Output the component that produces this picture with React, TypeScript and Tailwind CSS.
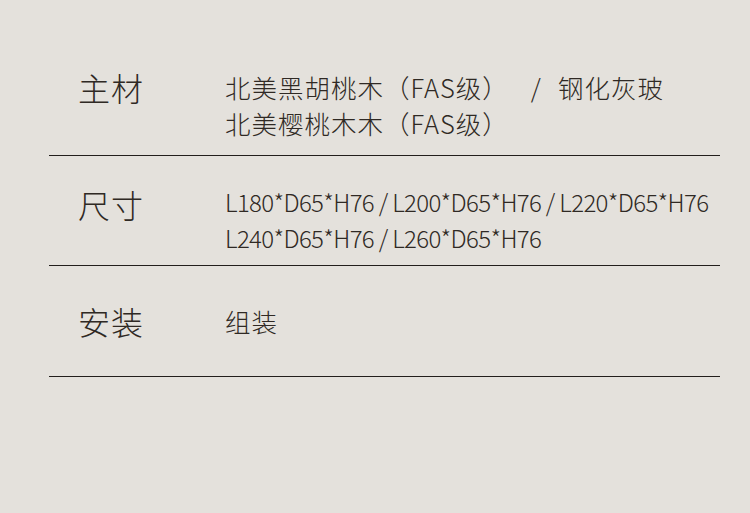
import React from 'react';

interface SpecRow {
  label: string;
  lines: React.ReactNode[];
  height: string;
  pad: string;
  latin?: boolean;
}

const rows: SpecRow[] = [
  {
    label: '主材',
    lines: [
      <>
        北美黑胡桃木（FAS级）<span className="ml-[22px] mr-[16px]">/</span>钢化灰玻
      </>,
      '北美樱桃木木（FAS级）',
    ],
    height: 'h-[156px]',
    pad: 'pt-[67px]',
  },
  {
    label: '尺寸',
    lines: ['L180*D65*H76 / L200*D65*H76 / L220*D65*H76', 'L240*D65*H76 / L260*D65*H76'],
    height: 'h-[110px]',
    pad: 'pt-[28px]',
    latin: true,
  },
  {
    label: '安装',
    lines: ['组装'],
    height: 'h-[111px]',
    pad: 'pt-[35px]',
  },
];

export default function App() {
  return (
    <div
      className="w-[750px] h-[513px] bg-[#e4e1dc] text-[#2f2924] overflow-hidden font-light"
      style={{ fontFamily: '"Noto Sans CJK SC", "Noto Sans", sans-serif' }}
    >
      <div className="ml-[49px] w-[671px]">
        {rows.map((row) => (
          <div key={row.label} className={`${row.height} ${row.pad} flex border-b-[1.5px] border-[#231f1c]`}>
            <div className="w-[176px] shrink-0 pl-[29px] text-[32px] leading-[40px] tracking-[1px]">{row.label}</div>
            <div className={row.latin ? 'text-[24px] leading-[36px] tracking-[-0.65px]' : 'text-[25.5px] leading-[36px] tracking-[1px] pt-[2px]'}>
              {row.lines.map((l, i) => (
                <div key={i} className="whitespace-nowrap">{l}</div>
              ))}
            </div>
          </div>
        ))}
      </div>
    </div>
  );
}
